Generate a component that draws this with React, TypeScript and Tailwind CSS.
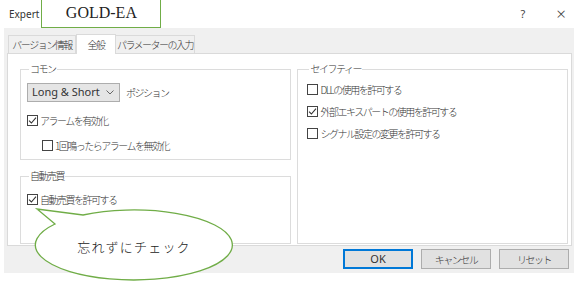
import React from "react";

const ui = { fontFamily: '"Noto Sans CJK JP", "Noto Sans", sans-serif' };
const latin = { fontFamily: '"Noto Sans", sans-serif' };

function Box({ checked }: { checked?: boolean }) {
  return (
    <span className="w-[11px] h-[11px] border border-[#444] bg-white flex items-center justify-center shrink-0">
      {checked && (
        <svg width="9" height="9" viewBox="0 0 9 9">
          <path d="M1 4.6 L3.4 7 L8 1.6" fill="none" stroke="#333" strokeWidth="1.1" />
        </svg>
      )}
    </span>
  );
}

function Check({ label, checked }: { label: string; checked?: boolean }) {
  return (
    <div className="flex items-center gap-[2px] h-[16px]">
      <Box checked={checked} />
      <span className="text-[10px] tracking-[-1.5px] text-[#333] font-light">{label}</span>
    </div>
  );
}

function Group({ title, className, children }: { title: string; className?: string; children: React.ReactNode }) {
  return (
    <fieldset className={`border border-[#dcdcdc] ${className ?? ""}`}>
      <legend className="ml-[2px] px-[1px] text-[10px] tracking-[-1.5px] text-[#333] font-light leading-[12px]">{title}</legend>
      {children}
    </fieldset>
  );
}

export default function App() {
  return (
    <div className="relative w-[585px] h-[282px] bg-white overflow-hidden" style={ui}>
      {/* title bar */}
      <div className="flex h-[28px] items-stretch">
        <span className="pl-[9px] pr-[2px] self-center text-[10px] text-[#333]" style={latin}>
          Expert
        </span>
        <div
          className="w-[120px] -mt-[2px] border-[1.5px] border-[#70ad47] flex items-center justify-center text-[16px] text-[#222]"
          style={{ fontFamily: '"Liberation Serif", serif' }}
        >
          GOLD-EA
        </div>
        <div className="flex-1" />
        <span className="self-center text-[11px] text-[#444] mr-[31px]" style={latin}>?</span>
        <span className="self-center text-[17px] text-[#444] mr-[19px] font-light" style={latin}>×</span>
      </div>

      {/* dialog body */}
      <div className="ml-[4px] w-[570px] h-[245px] bg-[#f0f0f0] pt-[5px] pl-[3px] pr-[2px]">
        <div className="flex items-end h-[20px] pl-[1px]">
          <div className="w-[68px] h-[18px] flex items-center justify-center border border-b-0 border-[#dadada] text-[10px] tracking-[-1.5px] text-[#333] font-light">バージョン情報</div>
          <div className="w-[40px] h-[20px] flex items-center justify-center bg-white border border-b-0 border-[#dadada] text-[10px] tracking-[-1.5px] text-[#333] font-light relative top-[1px]">全般</div>
          <div className="w-[79px] h-[18px] flex items-center justify-center border border-b-0 border-l-0 border-[#dadada] text-[10px] tracking-[-1.5px] text-[#333] font-light">パラメーターの入力</div>
        </div>
        <div className="h-[193px] bg-white border border-[#dadada] flex gap-[6px] pt-[9px] pl-[12px] pr-[3px] pb-[1px]">
          <div className="w-[272px] flex flex-col gap-[10px]">
            <Group title="コモン" className="h-[97px] px-[6px]">
              <div className="flex items-center gap-[6px] mt-[8px]">
                <div className="w-[93px] h-[19px] border border-[#adadad] bg-[#e5e5e5] flex items-center justify-between pl-[4px] pr-[5px]">
                  <span className="text-[11px] text-[#333]" style={latin}>Long &amp; Short</span>
                  <svg width="8" height="5" viewBox="0 0 8 5">
                    <path d="M0.5 0.5 L4 4 L7.5 0.5" fill="none" stroke="#666" strokeWidth="1" />
                  </svg>
                </div>
                <span className="text-[10px] tracking-[-1.5px] text-[#333] font-light">ポジション</span>
              </div>
              <div className="mt-[10px]">
                <Check label="アラームを有効化" checked />
              </div>
              <div className="mt-[9px] pl-[15px]">
                <Check label="1回鳴ったらアラームを無効化" />
              </div>
            </Group>
            <Group title="自動売買" className="h-[74px] px-[6px]">
              <div className="mt-[9px]">
                <Check label="自動売買を許可する" checked />
              </div>
            </Group>
          </div>
          <Group title="セイフティー" className="w-[271px] h-[181px] px-[9px]">
            <div className="flex flex-col gap-[6px] mt-[6px]">
              <Check label="DLLの使用を許可する" />
              <Check label="外部エキスパートの使用を許可する" checked />
              <Check label="シグナル設定の変更を許可する" />
            </div>
          </Group>
        </div>
        <div className="flex justify-end gap-[8px] pt-[3px] pr-[3px]">
          <button className="w-[70px] h-[20px] border-2 border-[#0078d7] bg-[#e1e1e1] text-[11px] text-[#333]" style={latin}>OK</button>
          <button className="w-[70px] h-[20px] border border-[#adadad] bg-[#e1e1e1] text-[10px] tracking-[-1.5px] text-[#333] font-light">キャンセル</button>
          <button className="w-[70px] h-[20px] border border-[#adadad] bg-[#e1e1e1] text-[10px] tracking-[-1.5px] text-[#333] font-light">リセット</button>
        </div>
      </div>

      {/* callout bubble */}
      <svg className="absolute left-0 top-0 pointer-events-none" width="585" height="282" viewBox="0 0 585 282">
        <path
          d="M55 224 L37 209 L83 215 A98.5 35 0 1 1 55 224 Z"
          fill="white"
          stroke="#70ad47"
          strokeWidth="1.3"
        />
        <text
          x="134"
          y="252"
          textAnchor="middle"
          fontSize="13"
          letterSpacing="1.2"
          fill="#222"
          style={{ fontFamily: '"Noto Sans CJK JP", sans-serif', fontWeight: 300 }}
        >
          忘れずにチェック
        </text>
      </svg>
    </div>
  );
}
